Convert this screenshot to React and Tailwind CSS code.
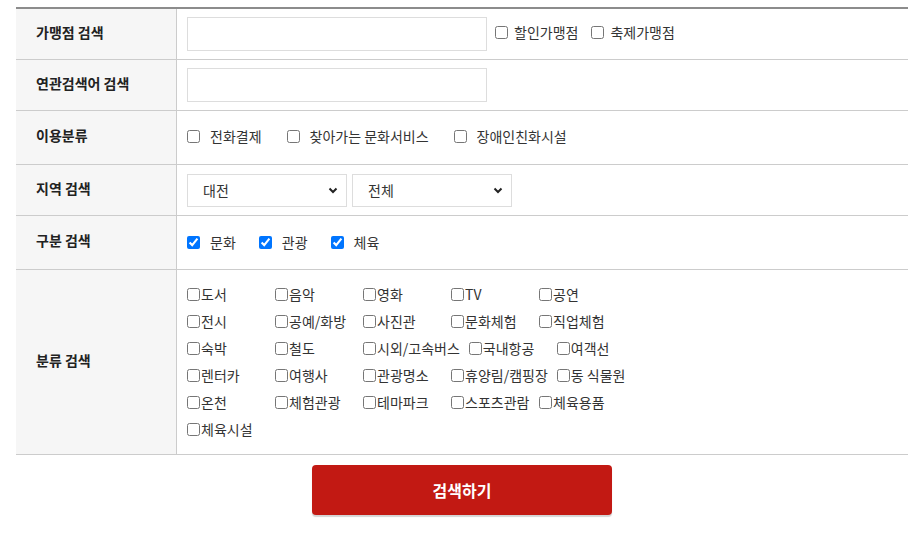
import { useState } from "react";

const font = { fontFamily: '"Noto Sans CJK KR", "Noto Sans", sans-serif' };

const categories = [
  ["도서", "음악", "영화", "TV", "공연"],
  ["전시", "공예/화방", "사진관", "문화체험", "직업체험"],
  ["숙박", "철도", "시외/고속버스", "국내항공", "여객선"],
  ["렌터카", "여행사", "관광명소", "휴양림/캠핑장", "동 식물원"],
  ["온천", "체험관광", "테마파크", "스포츠관람", "체육용품"],
  ["체육시설"],
];

const Row = ({ label, h, children }) => (
  <div className={`flex border-b border-[#cccccc] ${h}`}>
    <div className="w-[161px] shrink-0 bg-[#f6f6f6] border-r border-[#cccccc] pl-[20px] pb-[4px] flex items-center text-[14px] font-bold text-[#222]">
      {label}
    </div>
    <div className="flex-1 pl-[10px] flex items-center text-[14px] text-[#333]">
      {children}
    </div>
  </div>
);

const Chevron = () => (
  <svg className="absolute right-[9px] top-[13px] w-[10px] h-[7px] pointer-events-none" viewBox="0 0 10 7">
    <path d="M1.5 1.5 L5 5 L8.5 1.5" fill="none" stroke="#222" strokeWidth="2" />
  </svg>
);

const Select = ({ value, options }) => (
  <div className="relative w-[160px] h-[33px]">
    <select
      defaultValue={value}
      className="appearance-none w-full h-full border border-[#dddddd] bg-white pl-[15px] text-[14px] text-[#333] outline-none"
      style={font}
    >
      {options.map((o) => (
        <option key={o}>{o}</option>
      ))}
    </select>
    <Chevron />
  </div>
);

const App = () => {
  const [kinds, setKinds] = useState({ 문화: true, 관광: true, 체육: true });

  return (
    <div className="w-[918px] h-[536px] bg-white pt-[7px] px-[16px]" style={font}>
      <div className="w-[892px] border-t-2 border-[#8c8c8c]">
        <Row label="가맹점 검색" h="h-[51px]">
          <input type="text" className="w-[300px] h-[34px] border border-[#dddddd] outline-none" />
          <label className="flex items-center ml-[8px] pb-[3px]">
            <input type="checkbox" className="m-0 w-[13px] h-[13px]" />
            <span className="ml-[6px]">할인가맹점</span>
          </label>
          <label className="flex items-center ml-[13px] pb-[3px]">
            <input type="checkbox" className="m-0 w-[13px] h-[13px]" />
            <span className="ml-[6px]">축제가맹점</span>
          </label>
        </Row>

        <Row label="연관검색어 검색" h="h-[51px]">
          <input type="text" className="w-[300px] h-[34px] border border-[#dddddd] outline-none" />
        </Row>

        <Row label="이용분류" h="h-[54px]">
          {["전화결제", "찾아가는 문화서비스", "장애인친화시설"].map((t) => (
            <label key={t} className="flex items-center mr-[25px] pb-[2px]">
              <input type="checkbox" className="m-0 w-[13px] h-[13px]" />
              <span className="ml-[10px]">{t}</span>
            </label>
          ))}
        </Row>

        <Row label="지역 검색" h="h-[51px]">
          <div className="flex gap-[5px]">
            <Select value="대전" options={["서울", "부산", "대구", "인천", "광주", "대전", "울산"]} />
            <Select value="전체" options={["전체", "동구", "중구", "서구", "유성구", "대덕구"]} />
          </div>
        </Row>

        <Row label="구분 검색" h="h-[54px]">
          {Object.keys(kinds).map((k) => (
            <label key={k} className="flex items-center mr-[23px] pb-[1px]">
              <input
                type="checkbox"
                className="m-0 w-[13px] h-[13px]"
                checked={kinds[k]}
                onChange={() => setKinds({ ...kinds, [k]: !kinds[k] })}
              />
              <span className="ml-[10px]">{k}</span>
            </label>
          ))}
        </Row>

        <Row label="분류 검색" h="h-[185px]">
          <div className="flex flex-col">
            {categories.map((line, i) => (
              <div key={i} className="flex h-[27px] items-center">
                {line.map((c) => (
                  <label key={c} className="flex items-center min-w-[79px] mr-[9px] whitespace-nowrap">
                    <input type="checkbox" className="m-0 w-[13px] h-[13px]" />
                    <span className="ml-[1px]">{c}</span>
                  </label>
                ))}
              </div>
            ))}
          </div>
        </Row>
      </div>

      <div className="flex justify-center pt-[10px] w-[892px]">
        <button className="w-[300px] h-[50px] rounded-[4px] bg-[#c21913] text-white text-[16px] font-bold shadow-[0_2px_1px_#d4d4d4]">
          검색하기
        </button>
      </div>
    </div>
  );
};

export default App;
